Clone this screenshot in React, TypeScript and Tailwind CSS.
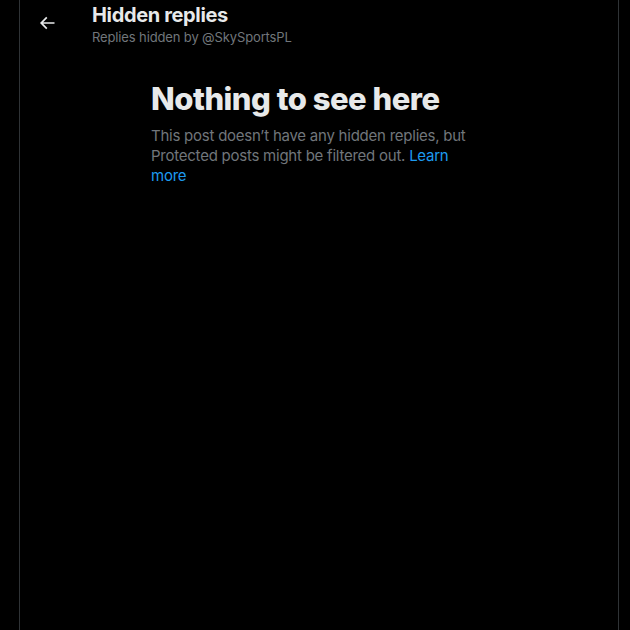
import React from "react";

export default function App() {
  return (
    <div className="min-h-[630px] w-[630px] bg-black" style={{ fontFamily: "Inter, 'Noto Sans', sans-serif" }}>
      <div className="ml-[19px] w-[600px] min-h-[630px] border-x border-[#2f3336]">
        <div className="flex h-[53px] items-start px-4 pt-[3px]">
          <div className="w-14 flex items-center">
            <div className="ml-[-7px] mt-[2px] flex h-9 w-9 items-center justify-center">
              <svg viewBox="0 0 24 24" width="20" height="20" fill="#e7e9ea">
                <path d="M7.414 13l5.043 5.04-1.414 1.42L3.586 12l7.457-7.46 1.414 1.42L7.414 11H21v2H7.414z" />
              </svg>
            </div>
          </div>
          <div className="flex flex-col">
            <div className="text-[20px] leading-6 font-bold tracking-[-0.35px] text-[#e7e9ea]">Hidden replies</div>
            <div className="mt-[2px] text-[13px] leading-4 tracking-[-0.13px] text-[#71767b]">Replies hidden by @SkySportsPL</div>
          </div>
        </div>
        <div className="mx-auto mt-[28px] max-w-[400px] px-8">
          <div className="mb-[9px] text-[31px] leading-9 font-extrabold tracking-[-0.5px] text-[#e7e9ea]">Nothing to see here</div>
          <div className="text-[15px] leading-5 tracking-[-0.24px] text-[#71767b]">
            This post doesn’t have any hidden replies, but Protected posts might be filtered out.{" "}
            <span className="text-[#1d9bf0]">Learn more</span>
          </div>
        </div>
      </div>
    </div>
  );
}
